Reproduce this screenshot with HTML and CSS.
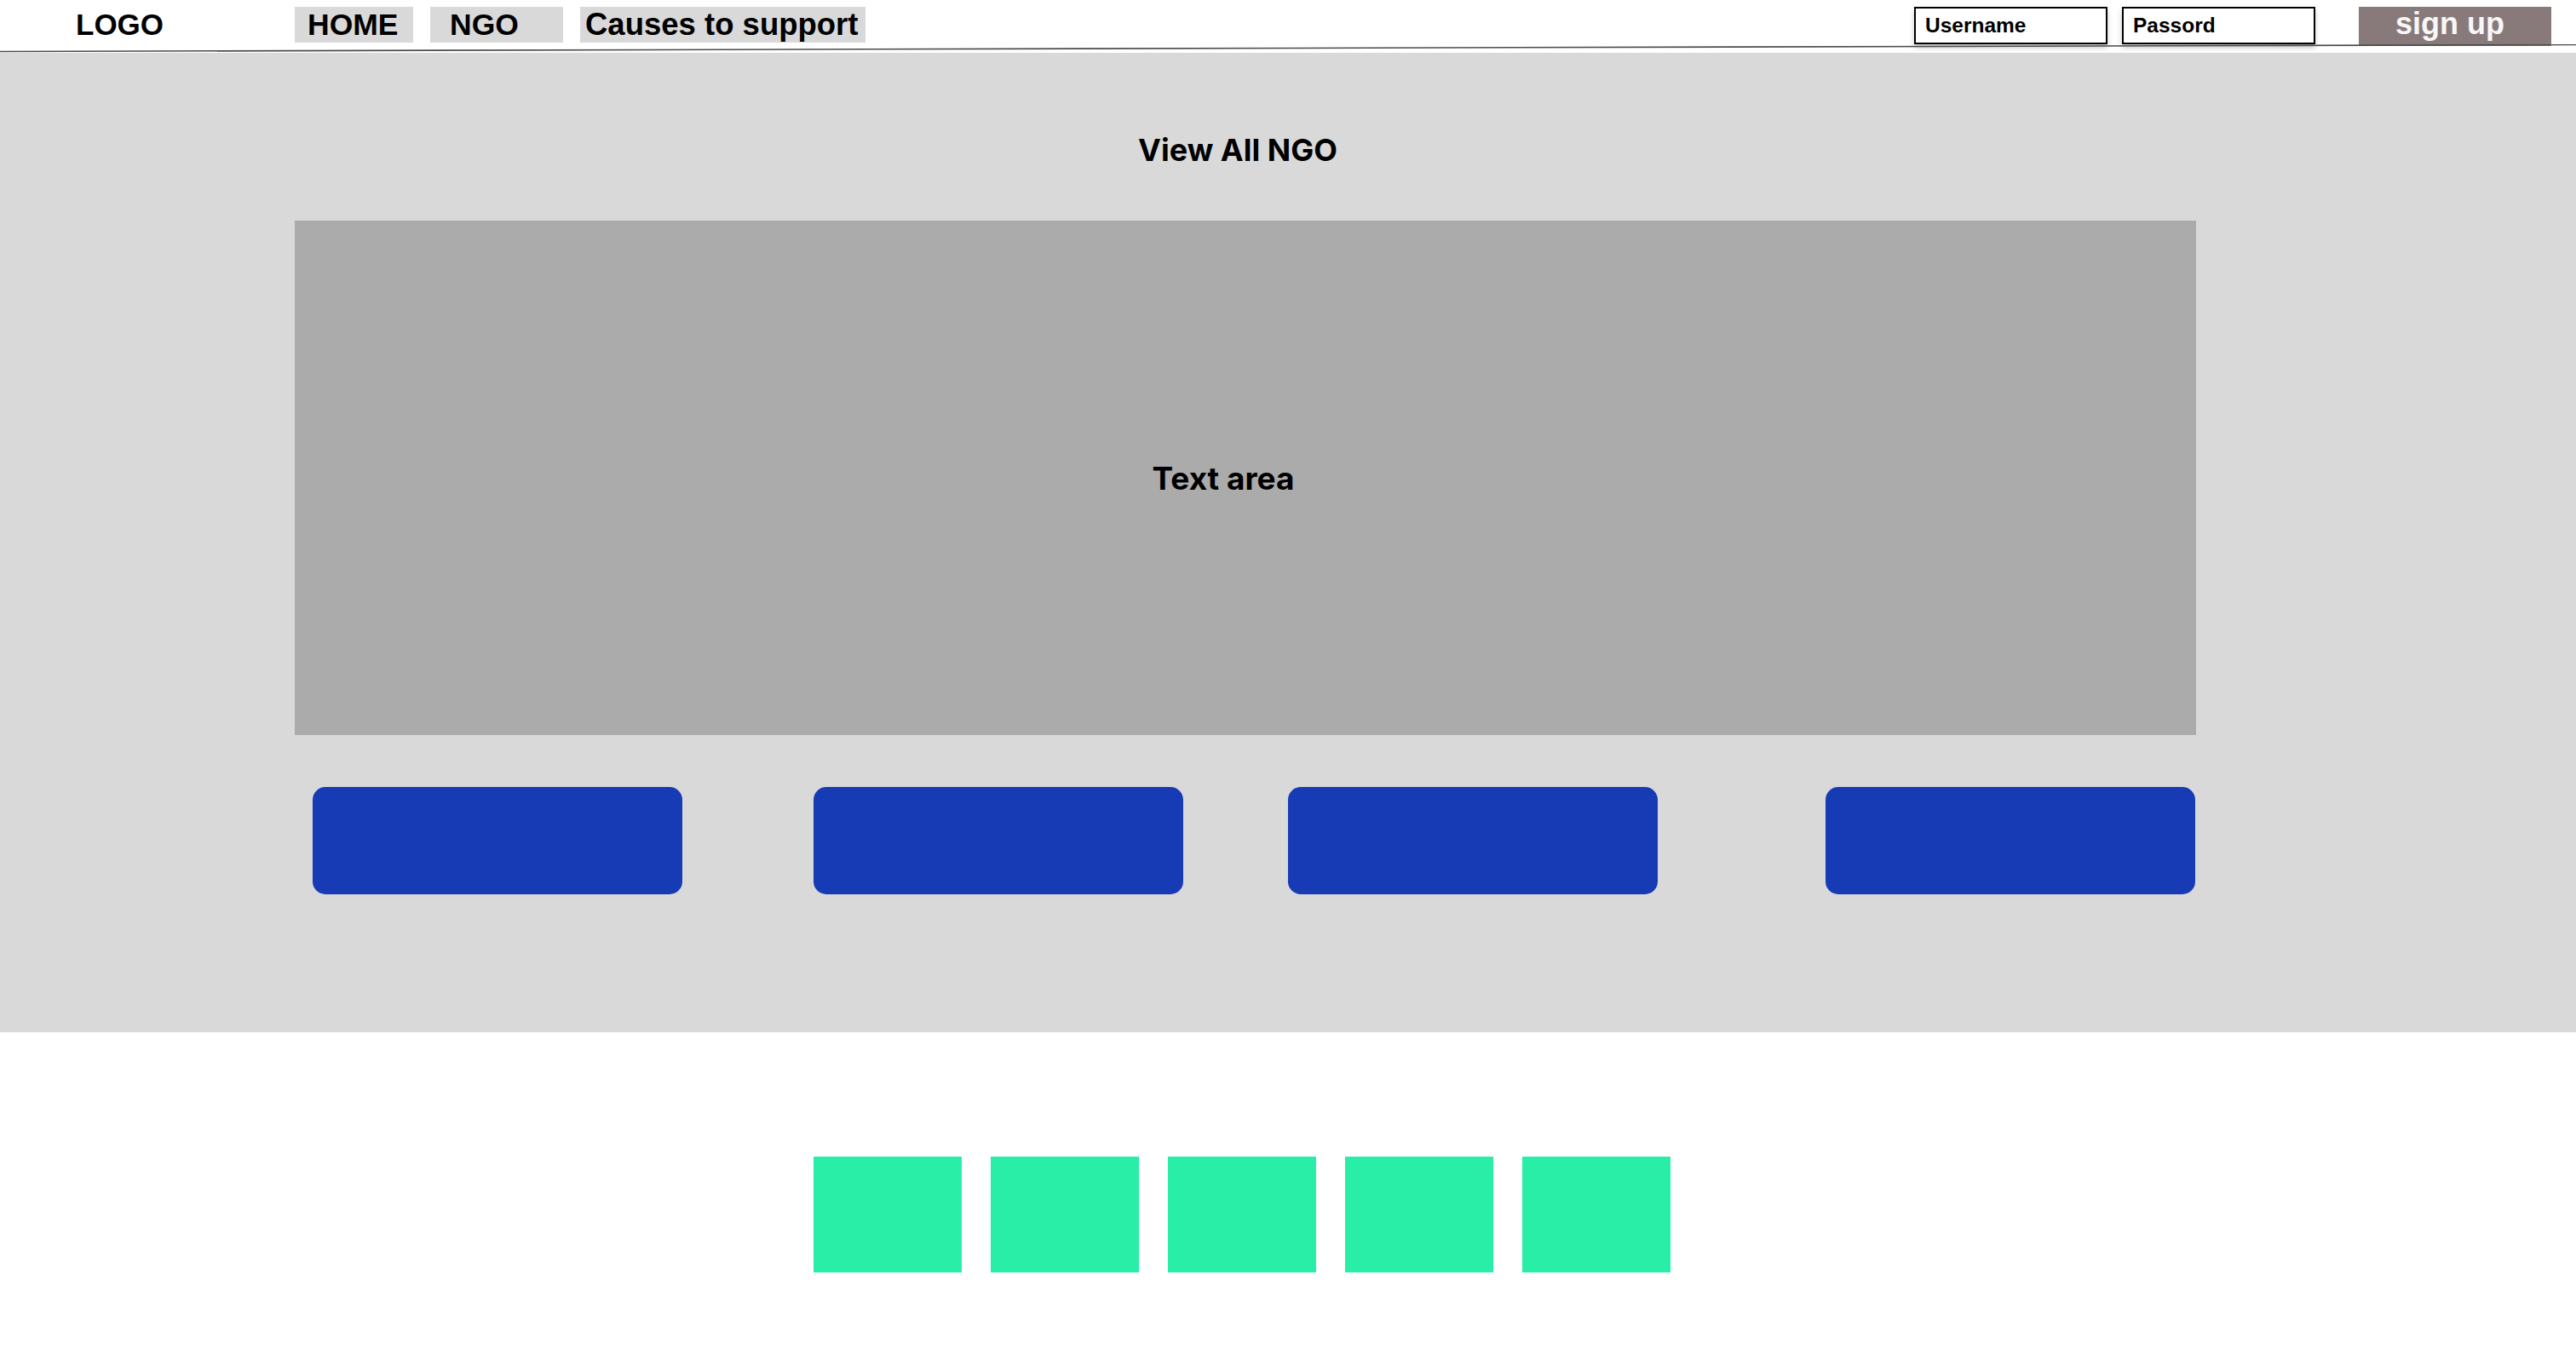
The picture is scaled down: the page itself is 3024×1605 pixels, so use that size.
FILE: index.html
```html
<!DOCTYPE html>
<html lang="en">
<head>
<meta charset="utf-8">
<title>View All NGO</title>
<link rel="stylesheet" href="styles.css">
</head>
<body>
<header class="topbar">
  <div class="logo">LOGO</div>
  <nav class="nav">
    <a class="nav-item nav-home">HOME</a>
    <a class="nav-item nav-ngo">NGO</a>
    <a class="nav-item nav-causes">Causes to support</a>
  </nav>
  <div class="auth">
    <div class="field">Username</div>
    <div class="field">Passord</div>
    <div class="signup">sign up</div>
  </div>
</header>
<div class="rule">
  <svg class="rule-svg" viewBox="0 0 3024 10" preserveAspectRatio="none"><line x1="0" y1="8.5" x2="3024" y2="0.5" stroke="#4a4a4a" stroke-width="1.6"/></svg>
</div>
<main class="hero">
  <div class="hero-inner">
    <h1 class="title">View All NGO</h1>
    <div class="textarea"><span class="textarea-label">Text area</span></div>
    <div class="buttons">
      <div class="btn btn-1"></div>
      <div class="btn btn-2"></div>
      <div class="btn btn-3"></div>
      <div class="btn btn-4"></div>
    </div>
  </div>
</main>
<section class="tiles">
  <div class="tile"></div>
  <div class="tile"></div>
  <div class="tile"></div>
  <div class="tile"></div>
  <div class="tile"></div>
</section>
</body>
</html>
```

FILE: styles.css
```css
* { box-sizing: border-box; }
html, body { margin: 0; padding: 0; background: #ffffff; }
body { font-family: "Liberation Sans", Arial, sans-serif; color: #000; }

.topbar {
  display: flex;
  align-items: flex-start;
  height: 52px;
  padding-top: 8px;
  padding-left: 89px;
}
.logo {
  font-weight: 700;
  font-size: 35px;
  line-height: 42px;
  width: 257px;
}
.nav { display: flex; gap: 20px; }
.nav-item {
  display: block;
  height: 42px;
  background: #d9d9d9;
  font-weight: 700;
  font-size: 35.5px;
  line-height: 42px;
  white-space: nowrap;
}
.nav-home { width: 139px; padding-left: 15px; }
.nav-ngo { width: 156px; padding-left: 23px; }
.nav-causes { width: 335px; padding-left: 6px; font-size: 36.5px; }

.auth {
  display: flex;
  margin-left: auto;
  margin-right: 29px;
}
.field {
  width: 227px;
  height: 44px;
  border: 2px solid #000;
  background: #fff;
  font-weight: 700;
  font-size: 24.5px;
  line-height: 40px;
  padding-left: 11px;
  margin-right: 17px;
  box-shadow: 0 4px 6px rgba(0,0,0,0.22);
}
.signup {
  width: 226px;
  height: 46px;
  margin-left: 34px;
  background: #887a7a;
  color: #f7f7f7;
  font-weight: 700;
  font-size: 36px;
  line-height: 40px;
  text-align: center;
  padding-right: 12px;
}

.rule { height: 10px; }
.rule-svg { display: block; width: 100%; height: 10px; }

.hero {
  background: #d9d9d9;
  height: 1150px;
  padding-top: 92px;
}
.hero-inner {
  width: 2232px;
  margin-left: 346px;
}
.title {
  margin: 0;
  font-family: Inter, "Liberation Sans", sans-serif;
  font-weight: 700;
  font-size: 36px;
  line-height: 44px;
  text-align: center;
  padding-right: 18px;
}
.textarea {
  margin-top: 61px;
  height: 604px;
  background: #ababab;
  display: flex;
  align-items: center;
  justify-content: center;
  padding-right: 52px;
}
.textarea-label {
  font-family: Inter, "Liberation Sans", sans-serif;
  font-weight: 700;
  font-size: 37px;
}
.buttons {
  display: flex;
  margin-top: 61px;
}
.btn {
  width: 434px;
  height: 126px;
  border-radius: 15px;
  background: #173ab5;
}
.btn-1 { margin-left: 21px; }
.btn-2 { margin-left: 154px; }
.btn-3 { margin-left: 123px; }
.btn-4 { margin-left: 197px; }

.tiles {
  display: flex;
  gap: 34px;
  padding-left: 955px;
  padding-top: 146px;
}
.tile {
  width: 174px;
  height: 136px;
  background: #29eea7;
}
```
